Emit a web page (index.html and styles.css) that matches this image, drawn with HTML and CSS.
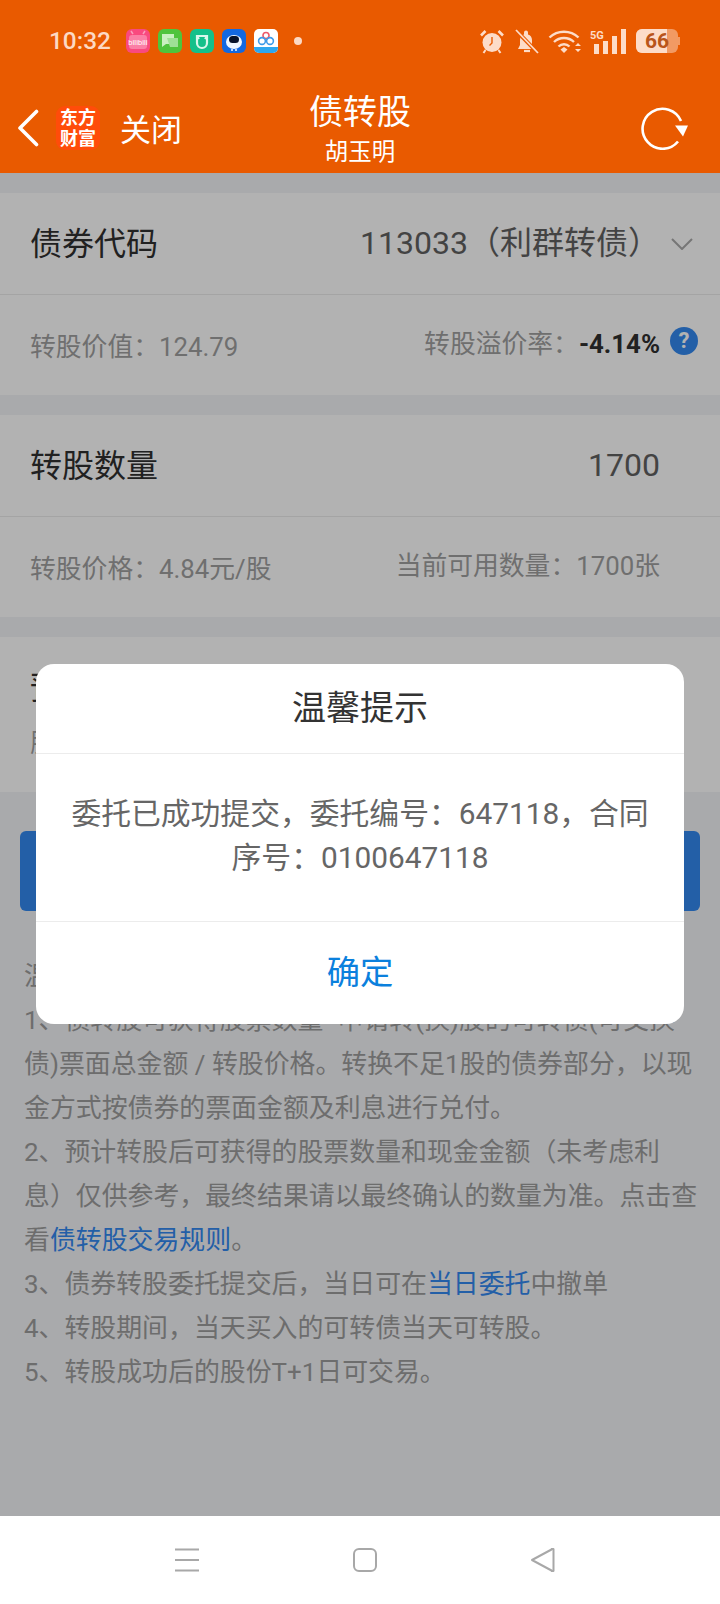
FILE: index.html
```html
<!DOCTYPE html>
<html lang="zh-CN">
<head>
    <meta charset="UTF-8">
    <meta name="viewport" content="width=device-width, initial-scale=1.0">
    <title>债转股</title>
    <link rel="stylesheet" href="styles.css">
</head>
<body>

<div class="app">
    <header class="header">
        <div class="status">
            <span class="time">10:32</span>
            <div class="apps">
                <svg class="app-icon" viewBox="0 0 24 24"><rect width="24" height="24" rx="6" fill="#f9497f"/><rect x="3" y="6" width="18" height="14" rx="3" fill="#fb7fa6"/><path d="M7 5 5 2M17 5l2-3" stroke="#fb9dbb" stroke-width="1.5"/><text x="12" y="16" font-size="7.5" text-anchor="middle" fill="#fff" font-family="Roboto">bilibili</text></svg>
                <svg class="app-icon" viewBox="0 0 24 24"><rect width="24" height="24" rx="6" fill="#4fc43d"/><path d="M4 5h12v10H8l-4 3z" fill="#c9f0c0"/><path d="M9 9h11v9h-8z" fill="#9fe095"/></svg>
                <svg class="app-icon" viewBox="0 0 24 24"><rect width="24" height="24" rx="6" fill="#14c08a"/><path d="M7 7h10v7a5 5 0 0 1-10 0z" fill="none" stroke="#d9f7ec" stroke-width="2.2"/><path d="M7 7l2 3M17 7l-2 3" stroke="#d9f7ec" stroke-width="2"/></svg>
                <svg class="app-icon" viewBox="0 0 24 24"><rect width="24" height="24" rx="6" fill="#1368e0"/><ellipse cx="12" cy="13" rx="8" ry="7" fill="#eef6ff"/><rect x="7" y="7" width="10" height="7" rx="3.5" fill="#07122a"/><path d="M9 20h2v2H9zM13 20h2v2h-2z" fill="#bcd8ff"/></svg>
                <svg class="app-icon" viewBox="0 0 24 24"><rect width="24" height="24" rx="5" fill="#fff"/><path d="M0 18h24v1a5 5 0 0 1-5 5H5a5 5 0 0 1-5-5z" fill="#2ea7ee"/><circle cx="12" cy="6.5" r="3" fill="none" stroke="#ec5a6a" stroke-width="1.6"/><circle cx="8" cy="12" r="3.4" fill="none" stroke="#3d9ae8" stroke-width="1.6"/><circle cx="16" cy="12" r="3.4" fill="none" stroke="#3d9ae8" stroke-width="1.6"/></svg>
                <span class="dot"></span>
            </div>
            <div class="indicators">
                <svg class="ind-alarm" width="24" height="25" viewBox="0 0 24 25"><circle cx="12" cy="13.5" r="9.5" fill="#fddcc8"/><path d="M12 8v6l-2.5 2.5" fill="none" stroke="#e95a00" stroke-width="1.4"/><path d="M1 6.5 5.5 2M23 6.5 18.5 2" stroke="#fddcc8" stroke-width="2.6"/><path d="M5.5 21 3.5 24M18.500 21l2 3" stroke="#fddcc8" stroke-width="2"/></svg>
                <svg class="ind-bell" width="24" height="25" viewBox="0 0 24 25"><path d="M3 20h17l-3-4v-5a6 6 0 0 0-4-5.600V3.500a2 2 0 0 0-4 0V5.500A6 6 0 0 0 5 11v5z" fill="#fddcc8"/><path d="M9 22h6" stroke="#fddcc8" stroke-width="2.200"/><path d="M1 1.500 23 24" stroke="#e95a00" stroke-width="4"/><path d="M1 1 23 24" stroke="#fddcc8" stroke-width="1.800"/></svg>
                <svg class="ind-wifi" width="33" height="25" viewBox="0 0 33 25"><path d="M1.500 8.500a21 21 0 0 1 29 0M6 13a14.500 14.500 0 0 1 20 0M10.500 17.500a8 8 0 0 1 11 0" fill="none" stroke="#fddcc8" stroke-width="2.400"/><path d="M12.500 20.500 16 18l3.500 2.500L16 24z" fill="#fddcc8"/><path d="M27 17h6l-3-3zM27 20h6l-3 3z" fill="#fddcc8"/></svg>
                <svg class="ind-signal" width="36" height="25" viewBox="0 0 36 25"><text x="0" y="9.500" font-size="11" font-weight="700" fill="#fddcc8" font-family="Roboto">5G</text><rect x="4" y="15" width="5" height="10" fill="#fddcc8"/><rect x="13" y="12" width="5" height="13" fill="#fddcc8"/><rect x="22" y="7" width="5" height="18" fill="#fddcc8"/><rect x="31" y="0" width="5" height="25" fill="#fddcc8"/></svg>
                <svg class="ind-battery" width="44" height="24" viewBox="0 0 44 24"><rect width="42" height="24" rx="6" fill="#f29a63"/><path d="M6 0h25v24H6a6 6 0 0 1-6-6V6a6 6 0 0 1 6-6z" fill="#fddcc8"/><rect x="42" y="8" width="2" height="8" fill="#f29a63"/><text x="21" y="19" font-size="21" font-weight="700" text-anchor="middle" fill="#b9551a" font-family="Roboto">66</text></svg>
            </div>
        </div>
        <div class="toolbar">
            <div class="toolbar-left">
                <svg class="back" width="22" height="38" viewBox="0 0 22 38"><path d="M19.500 2.500 3 19l16.500 16.500" fill="none" stroke="#fff" stroke-width="3.600" stroke-linecap="round" stroke-linejoin="round"/></svg>
                <div class="logo">东方<br>财富</div>
                <span class="close">关闭</span>
            </div>
            <div class="title-box">
                <div class="title">债转股</div>
                <div class="subtitle">胡玉明</div>
            </div>
            <div class="toolbar-right">
                <svg width="48" height="44" viewBox="0 0 48 44"><path d="M38 35.500A20 20 0 1 1 41 15" fill="none" stroke="#fff" stroke-width="2.600"/><path d="M35 19.500h13l-5 11z" fill="#fff"/></svg>
            </div>
        </div>
    </header>

    <main class="main">
        <section class="card">
            <div class="row">
                <span class="label">债券代码</span>
                <div class="value-wrap">
                    <span class="value">113033（利群转债）</span>
                    <svg class="chevron" width="22" height="12" viewBox="0 0 22 12"><path d="M1 1l10 10L21 1" fill="none" stroke="#aaa" stroke-width="2"/></svg>
                </div>
            </div>
            <div class="row">
                <span class="sub sub-left">转股价值：124.79</span>
                <div class="sub-right has-help">
                    <span class="sub">转股溢价率：<b class="strong">-4.14%</b></span>
                    <span class="help">?</span>
                </div>
            </div>
        </section>

        <section class="card">
            <div class="row">
                <span class="label">转股数量</span>
                <span class="value plain">1700</span>
            </div>
            <div class="row">
                <span class="sub sub-left">转股价格：4.84元/股</span>
                <span class="sub sub-right plain">当前可用数量：1700张</span>
            </div>
        </section>

        <section class="card card-last">
            <div class="label">预计转股数量</div>
            <div class="sub">股票</div>
        </section>

        <button class="submit">确认转股</button>

        <div class="notes">
            <p>温馨提示：</p>
            <p>1、债转股可获得股票数量=申请转(换)股的可转债(可交换债)票面总金额 / 转股价格。转换不足1股的债券部分，以现金方式按债券的票面金额及利息进行兑付。</p>
            <p>2、预计转股后可获得的股票数量和现金金额（未考虑利息）仅供参考，最终结果请以最终确认的数量为准。点击查看<a class="link">债转股交易规则</a>。</p>
            <p>3、债券转股委托提交后，当日可在<a class="link">当日委托</a>中撤单</p>
            <p>4、转股期间，当天买入的可转债当天可转股。</p>
            <p>5、转股成功后的股份T+1日可交易。</p>
        </div>

        <div class="overlay">
            <div class="dialog">
                <div class="dialog-title">温馨提示</div>
                <div class="dialog-body">委托已成功提交，委托编号：647118，合同序号：0100647118</div>
                <div class="dialog-btn">确定</div>
            </div>
        </div>
    </main>

    <nav class="nav">
        <svg width="24" height="24" viewBox="0 0 24 24"><path d="M0 1.500h24M0 12h24M0 22.500h24" stroke="#a8a8a8" stroke-width="2"/></svg>
        <svg width="24" height="24" viewBox="0 0 24 24"><rect x="1" y="1" width="22" height="22" rx="5" fill="none" stroke="#a8a8a8" stroke-width="2"/></svg>
        <svg width="24" height="24" viewBox="0 0 24 24"><path d="M1 12 20.500 1.500a1 1 0 0 1 2 .5v20a1 1 0 0 1-2 .5z" fill="none" stroke="#a8a8a8" stroke-width="2" stroke-linejoin="round"/></svg>
    </nav>
</div>

</body>
</html>
```

FILE: styles.css
```css
* {
    box-sizing: border-box;
}
html, body {
    margin: 0;
    padding: 0;
}
body {
    font-family: Roboto, "Noto Sans CJK SC", sans-serif;
    background: #fff;
    text-spacing-trim: space-all;
}
p {
    margin: 0;
}
.app {
    width: 720px;
    height: 1604px;
    display: flex;
    flex-direction: column;
    overflow: hidden;
}

/* header */
.header {
    height: 173px;
    background: #e95a00;
    color: #fff;
}
.status {
    height: 82px;
    display: flex;
    align-items: center;
    padding-left: 49px;
}
.time {
    width: 61px;
    margin-top: -2px;
    font-size: 24.4px;
    font-weight: 500;
    color: #fcd9c4;
    white-space: nowrap;
}
.apps {
    display: flex;
    align-items: center;
    gap: 8px;
    margin-left: 16px;
}
.app-icon {
    width: 24px;
    height: 24px;
}
.dot {
    width: 8px;
    height: 8px;
    margin-left: 8px;
    border-radius: 50%;
    background: #fcd9c4;
}
.indicators {
    display: flex;
    align-items: center;
    margin-left: 178px;
}
.ind-bell {
    margin-left: 11px;
}
.ind-wifi {
    margin-left: 9px;
}
.ind-signal {
    margin-left: 9px;
}
.ind-battery {
    margin-left: 10px;
}
.toolbar {
    height: 91px;
    display: grid;
    grid-template-columns: 1fr auto 1fr;
}
.toolbar-left {
    display: flex;
    align-items: center;
    padding-left: 17px;
}
.logo {
    width: 44px;
    height: 44px;
    margin-left: 17px;
    border-radius: 9px;
    background: #ff4c0a;
    font-size: 18px;
    font-weight: 700;
    line-height: 21px;
    padding-top: 1px;
    text-align: center;
}
.close {
    margin-left: 20px;
    font-size: 31px;
}
.title-box {
    margin-top: 10px;
    text-align: center;
}
.title {
    font-size: 34px;
    line-height: 40px;
}
.subtitle {
    font-size: 23.5px;
    line-height: 40px;
}
.toolbar-right {
    display: flex;
    justify-content: flex-end;
    align-items: center;
    padding-right: 32px;
}

/* page content, dimmed by the overlay */
.main {
    position: relative;
    flex: 1;
    padding-top: 20px;
    background: #f3f4f7;
    overflow: hidden;
}
.card {
    margin-bottom: 20px;
    background: #fff;
}
.row {
    height: 100px;
    display: flex;
    align-items: center;
    justify-content: space-between;
    padding: 0 22px 0 30px;
}
.row:first-child {
    height: 102px;
    border-bottom: 1px solid #ebebeb;
}
.label {
    font-size: 32px;
    line-height: 36px;
    color: #303030;
}
.value {
    margin-top: -1px;
    font-size: 32px;
    line-height: 36px;
    color: #616161;
}
.value-wrap {
    display: flex;
    align-items: center;
    gap: 11px;
    padding-right: 5px;
}
.plain {
    margin-right: 38px;
}
.sub {
    font-size: 25.8px;
    line-height: 36px;
    color: #9f9f9f;
}
.sub-left {
    margin-top: 4px;
}
.sub-right {
    margin-bottom: 2px;
}
.has-help {
    display: flex;
    align-items: center;
    gap: 10px;
}
.strong {
    font-weight: 700;
    color: #303030;
}
.help {
    width: 28px;
    height: 28px;
    margin-top: -6px;
    border-radius: 50%;
    background: #3389f0;
    color: #fff;
    font-size: 22px;
    font-weight: 700;
    line-height: 28px;
    text-align: center;
}
.card-last {
    height: 155px;
    margin-bottom: 39px;
    padding: 33px 30px 0;
}
.card-last .sub {
    margin-top: 19px;
}
.submit {
    display: block;
    width: 680px;
    height: 80px;
    margin: 0 20px;
    border: none;
    border-radius: 6px;
    background: #3389f0;
    color: #fff;
    font-family: inherit;
    font-size: 31px;
}
.notes {
    margin-top: 43px;
    padding: 0 22px 0 24px;
    font-size: 25.9px;
    line-height: 44px;
    color: #9d9d9d;
}
.link {
    color: #3389f0;
}

/* dialog */
.overlay {
    position: absolute;
    inset: 0;
    display: flex;
    align-items: center;
    justify-content: center;
    padding-bottom: 1px;
    background: rgba(0, 0, 0, 0.3);
}
.dialog {
    width: 648px;
    height: 360px;
    display: flex;
    flex-direction: column;
    border-radius: 18px;
    background: #fff;
}
.dialog-title {
    height: 90px;
    border-bottom: 1px solid #ececec;
    color: #333;
    font-size: 34px;
    line-height: 88px;
    text-align: center;
}
.dialog-body {
    height: 169px;
    display: flex;
    align-items: center;
    padding: 0 24px 2px;
    border-bottom: 1px solid #ececec;
    color: #666;
    font-size: 29.8px;
    line-height: 44px;
    text-align: center;
}
.dialog-btn {
    flex: 1;
    color: #0b80dd;
    font-size: 33.3px;
    line-height: 102px;
    text-align: center;
}

/* android nav */
.nav {
    height: 88px;
    display: flex;
    align-items: center;
    gap: 154px;
    padding-left: 175px;
    background: #fff;
}
```
